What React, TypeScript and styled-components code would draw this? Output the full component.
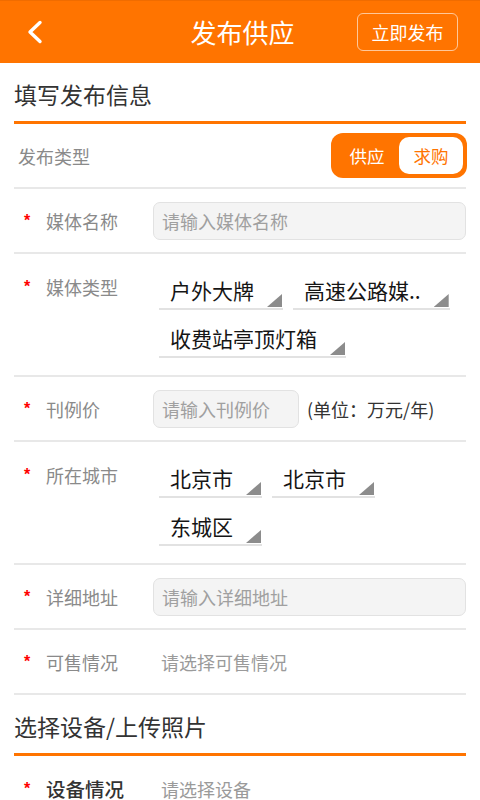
import React from "react";
import styled, { createGlobalStyle } from "styled-components";

const ORANGE = "#ff7400";
const FONT = `"Noto Sans CJK SC", "Noto Sans", "Liberation Sans", sans-serif`;

const Global = createGlobalStyle`
  html, body { margin: 0; padding: 0; background: #fff; }
  body { font-family: ${FONT}; width: 480px; }
  * { box-sizing: border-box; }
`;

const Page = styled.div`
  width: 480px;
  min-height: 800px;
  background: #fff;
`;

const Header = styled.header`
  height: 63px;
  background: ${ORANGE};
  border-top: 1px solid #f06c00;
  display: grid;
  grid-template-columns: 1fr auto 1fr;
  align-items: center;
  padding: 0 22px 0 27px;
`;

const BackButton = styled.button`
  justify-self: start;
  background: none;
  border: 0;
  padding: 0;
  width: 16px;
  height: 24px;
  display: flex;
  cursor: pointer;
`;

const Title = styled.h1`
  margin: 0;
  color: #fff;
  font-size: 26px;
  font-weight: 400;
  line-height: 30px;
`;

const PublishButton = styled.button`
  justify-self: end;
  height: 38px;
  width: 101px;
  border: 1.5px solid rgba(255, 255, 255, 0.6);
  border-radius: 6px;
  background: transparent;
  color: #fff;
  font-family: ${FONT};
  font-size: 18px;
  padding: 0;
  cursor: pointer;
`;

const Body = styled.main`
  padding: 0 14px;
`;

const SectionTitle = styled.h2`
  margin: 0;
  padding: 16px 0 12px;
  font-size: 23px;
  line-height: 30px;
  font-weight: 400;
  color: #333;
  border-bottom: 3px solid ${ORANGE};
`;

const Row = styled.div<{ $top?: boolean; $last?: boolean }>`
  display: flex;
  align-items: ${(p) => (p.$top ? "flex-start" : "center")};
  min-height: ${(p) => (p.$top ? "0" : "65px")};
  padding: ${(p) => (p.$top ? "18px 0 17px" : "0")};
  border-bottom: ${(p) => (p.$last ? "none" : "2px solid #e8e8e8")};
`;

const LabelCell = styled.div<{ $plain?: boolean }>`
  width: 139px;
  flex: none;
  display: flex;
  align-items: center;
  padding-left: ${(p) => (p.$plain ? "4px" : "10px")};
  line-height: 30px;
`;

const Star = styled.span`
  width: 22px;
  color: #f00;
  font-size: 16px;
  font-family: "Liberation Sans", sans-serif;
  font-weight: 700;
`;

const Label = styled.span<{ $strong?: boolean }>`
  font-size: ${(p) => (p.$strong ? "19.5px" : "18px")};
  color: ${(p) => (p.$strong ? "#333" : "#8a8a8a")};
  font-weight: ${(p) => (p.$strong ? 500 : 400)};
`;

const Field = styled.input<{ $width?: number }>`
  height: 38px;
  flex: ${(p) => (p.$width ? "none" : "1")};
  width: ${(p) => (p.$width ? `${p.$width}px` : "auto")};
  min-width: 0;
  background: #f4f4f4;
  border: 1px solid #e2e2e2;
  border-radius: 7px;
  padding: 0 8px;
  font-family: ${FONT};
  font-size: 18px;
  color: #333;
  outline: none;
  &::placeholder {
    color: #a0a0a0;
  }
`;

const Unit = styled.span`
  margin-left: 8px;
  font-size: 18px;
  color: #333;
`;

const Value = styled.span`
  padding-left: 8px;
  font-size: 18px;
  color: #9a9a9a;
`;

const Toggle = styled.div`
  margin-left: auto;
  margin-right: -1px;
  display: flex;
  width: 136px;
  height: 45px;
  padding: 4px;
  border-radius: 12px;
  background: ${ORANGE};
`;

const ToggleOption = styled.button<{ $active?: boolean }>`
  flex: 1;
  border: 0;
  border-radius: 10px;
  padding: 0;
  background: ${(p) => (p.$active ? "#fff" : "transparent")};
  color: ${(p) => (p.$active ? ORANGE : "#fff")};
  font-family: ${FONT};
  font-size: 17.5px;
  cursor: pointer;
`;

const Selects = styled.div`
  flex: 1;
  display: flex;
  flex-wrap: wrap;
  gap: 10px;
  margin-left: 6px;
`;

const Select = styled.div`
  position: relative;
  height: 38px;
  padding: 0 29px 0 11px;
  border-bottom: 2px solid #e2e2e2;
  font-size: 21px;
  line-height: 36px;
  color: #151515;
  white-space: nowrap;
`;

const Corner = styled.span`
  position: absolute;
  right: 1px;
  bottom: 1px;
  width: 15px;
  height: 13px;
  background: #8c8c8c;
  clip-path: polygon(100% 0, 100% 100%, 0 100%);
`;

const Dropdown = ({ children }: { children: React.ReactNode }) => (
  <Select>
    {children}
    <Corner />
  </Select>
);

export default function App() {
  return (
    <Page>
      <Global />
      <Header>
        <BackButton aria-label="返回">
          <svg width="16" height="24" viewBox="0 0 16 24">
            <polyline
              points="13,2.5 3,12 13,21.5"
              fill="none"
              stroke="#fff"
              strokeWidth="3.4"
              strokeLinecap="round"
              strokeLinejoin="round"
            />
          </svg>
        </BackButton>
        <Title>发布供应</Title>
        <PublishButton>立即发布</PublishButton>
      </Header>
      <Body>
        <SectionTitle>填写发布信息</SectionTitle>
        <Row>
          <LabelCell $plain>
            <Label>发布类型</Label>
          </LabelCell>
          <Toggle>
            <ToggleOption>供应</ToggleOption>
            <ToggleOption $active>求购</ToggleOption>
          </Toggle>
        </Row>
        <Row>
          <LabelCell>
            <Star>*</Star>
            <Label>媒体名称</Label>
          </LabelCell>
          <Field placeholder="请输入媒体名称" />
        </Row>
        <Row $top>
          <LabelCell>
            <Star>*</Star>
            <Label>媒体类型</Label>
          </LabelCell>
          <Selects>
            <Dropdown>户外大牌</Dropdown>
            <Dropdown>高速公路媒..</Dropdown>
            <Dropdown>收费站亭顶灯箱</Dropdown>
          </Selects>
        </Row>
        <Row>
          <LabelCell>
            <Star>*</Star>
            <Label>刊例价</Label>
          </LabelCell>
          <Field $width={146} placeholder="请输入刊例价" />
          <Unit>(单位：万元/年)</Unit>
        </Row>
        <Row $top>
          <LabelCell>
            <Star>*</Star>
            <Label>所在城市</Label>
          </LabelCell>
          <Selects>
            <Dropdown>北京市</Dropdown>
            <Dropdown>北京市</Dropdown>
            <Dropdown>东城区</Dropdown>
          </Selects>
        </Row>
        <Row>
          <LabelCell>
            <Star>*</Star>
            <Label>详细地址</Label>
          </LabelCell>
          <Field placeholder="请输入详细地址" />
        </Row>
        <Row>
          <LabelCell>
            <Star>*</Star>
            <Label>可售情况</Label>
          </LabelCell>
          <Value>请选择可售情况</Value>
        </Row>
        <SectionTitle>选择设备/上传照片</SectionTitle>
        <Row $last>
          <LabelCell>
            <Star>*</Star>
            <Label $strong>设备情况</Label>
          </LabelCell>
          <Value>请选择设备</Value>
        </Row>
      </Body>
    </Page>
  );
}
